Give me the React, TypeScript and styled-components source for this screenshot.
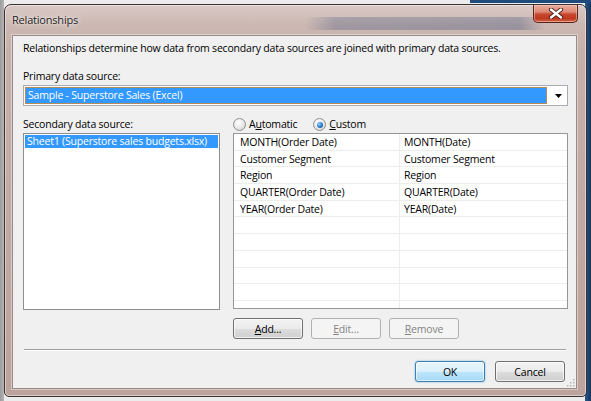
import React from 'react';
import styled, { createGlobalStyle } from 'styled-components';

const GlobalStyle = createGlobalStyle`
  html, body {
    margin: 0;
    padding: 0;
  }
  body {
    background: #e9e9e9;
    font-family: "Open Sans", "Noto Sans", "Liberation Sans", sans-serif;
    font-size: 10.5px;
    letter-spacing: -0.2px;
    color: #000;
  }
  * {
    box-sizing: border-box;
  }
`;

const Screen = styled.div`
  width: 591px;
  height: 401px;
  overflow: hidden;
  padding: 4px 0 0 4px;
  background:
    linear-gradient(#1f4a7c, #1f4a7c) 470px 0 / 121px 3px no-repeat,
    linear-gradient(90deg, #9c9c9c 0, #b5b5b5 4px, #ececec 4px, #ececec 585px, #2a578c 585px, #16365e 591px);
`;

const Window = styled.div`
  width: 583px;
  height: 393px;
  border: 1px solid #3b3231;
  border-radius: 7px 7px 5px 5px;
  background: linear-gradient(180deg, #d0bdb8 0%, #c6b0aa 12%, #bca39c 100%);
  box-shadow: inset 0 0 0 1px rgba(255, 255, 255, 0.45);
  display: flex;
  flex-direction: column;
`;

const TitleBar = styled.div`
  height: 30px;
  display: flex;
  align-items: flex-start;
  padding-left: 7px;
  border-radius: 6px 6px 0 0;
  background:
    linear-gradient(180deg, rgba(255, 255, 255, 0.2), rgba(255, 255, 255, 0) 70%),
    linear-gradient(90deg, rgba(60, 80, 120, 0) 300px, rgba(60, 80, 120, 0.3) 330px, rgba(60, 80, 120, 0.35) 515px, rgba(60, 80, 120, 0) 540px) 0 12px / 100% 13px no-repeat;
`;

const Title = styled.div`
  margin-top: 7px;
  font-size: 11px;
  line-height: 15px;
  color: #1c1c1c;
  text-shadow: 0 0 6px rgba(255, 255, 255, 0.9), 0 0 2px rgba(255, 255, 255, 0.8);
`;

const CloseButton = styled.div`
  width: 45px;
  height: 18px;
  margin-left: auto;
  margin-right: 8px;
  border: 1px solid #5a2219;
  border-top: none;
  border-radius: 0 0 5px 5px;
  background: linear-gradient(180deg, #e9ab9d 0%, #dc8a76 40%, #c8452e 55%, #c0391f 80%, #d66a4e 100%);
  box-shadow: inset 0 0 0 1px rgba(255, 220, 210, 0.45);
  display: flex;
  align-items: center;
  justify-content: center;
`;

const Client = styled.div`
  flex: 1;
  margin: 0 9px 7px 7px;
  position: relative;
  background: #f0f0f0;
  border: 1px solid #978a86;
  box-shadow: 0 0 0 1px rgba(255, 255, 255, 0.4);
  padding: 5px 8px 0 10px;
  display: flex;
  flex-direction: column;
`;

const Text = styled.div<{ $top?: number }>`
  line-height: 15px;
  height: 15px;
  white-space: nowrap;
  margin-top: ${p => p.$top ?? 0}px;
`;

const Combo = styled.div`
  margin-top: 1px;
  height: 21px;
  border: 1px solid #abadb3;
  background: #fff;
  padding: 1px;
  display: flex;
`;

const ComboField = styled.div`
  flex: 1;
  background: #3399ff;
  border: 1px solid #b58a5a;
  color: #fff;
  padding-left: 2px;
  line-height: 15px;
  white-space: nowrap;
`;

const ComboArrow = styled.div`
  width: 19px;
  padding-left: 3px;
  display: flex;
  align-items: center;
  justify-content: center;
`;

const Columns = styled.div`
  margin-top: 11px;
  display: grid;
  grid-template-columns: 197px 335px;
  column-gap: 13px;
`;

const Column = styled.div`
  display: flex;
  flex-direction: column;
`;

const ListBox = styled.div`
  margin-top: 1px;
  height: 177px;
  border: 1px solid #8e8f8f;
  background: #fff;
  padding: 1px;
`;

const ListItem = styled.div<{ $selected?: boolean }>`
  height: 13px;
  line-height: 13px;
  padding-left: 2px;
  white-space: nowrap;
  overflow: hidden;
  background: ${p => (p.$selected ? '#3399ff' : 'transparent')};
  color: ${p => (p.$selected ? '#fff' : '#000')};
`;

const RadioRow = styled.div`
  height: 15px;
  display: flex;
  align-items: center;
  gap: 16px;
`;

const RadioLabel = styled.label`
  display: flex;
  align-items: center;
  gap: 3px;
  line-height: 15px;
`;

const RadioCircle = styled.span<{ $checked?: boolean }>`
  width: 13px;
  height: 13px;
  border-radius: 50%;
  border: 1px solid #8e8f8f;
  background: radial-gradient(circle at 40% 35%, #ffffff 0, #ececec 45%, #cdcdcd 100%);
  display: flex;
  align-items: center;
  justify-content: center;

  &::after {
    content: '';
    display: ${p => (p.$checked ? 'block' : 'none')};
    width: 6px;
    height: 6px;
    border-radius: 50%;
    background: radial-gradient(circle at 35% 35%, #9ad6ff 0, #2a7fd0 50%, #0d3f80 100%);
  }
`;

const Table = styled.div`
  margin-top: 1px;
  height: 176px;
  border: 1px solid #969696;
  background: #fff;
  overflow: hidden;
`;

const TableRow = styled.div`
  height: 16.7px;
  display: grid;
  grid-template-columns: 166px 1fr;
  border-bottom: 1px solid #ededed;
`;

const Cell = styled.div<{ $first?: boolean }>`
  padding-left: ${p => (p.$first ? 6 : 4)}px;
  line-height: 16px;
  white-space: nowrap;
  border-right: ${p => (p.$first ? '1px solid #ededed' : 'none')};
`;

const ButtonRow = styled.div`
  margin-top: 9px;
  display: flex;
  gap: 8px;
`;

const Button = styled.button<{ $default?: boolean }>`
  width: 70px;
  height: 21px;
  padding: 0;
  font-family: inherit;
  font-size: 10.5px;
  letter-spacing: -0.2px;
  color: #000;
  border: 1px solid ${p => (p.$default ? '#3c7fb1' : '#707070')};
  border-radius: 3px;
  background: ${p =>
    p.$default
      ? 'linear-gradient(#eaf6fd 0%, #d9f0fc 50%, #bee6fd 50%, #a7d9f5 100%)'
      : 'linear-gradient(#f2f2f2 0%, #ebebeb 50%, #dddddd 50%, #cfcfcf 100%)'};
  box-shadow: ${p =>
    p.$default
      ? 'inset 0 0 0 1px rgba(255,255,255,0.6), 0 0 2px rgba(60,160,220,0.7)'
      : 'inset 0 0 0 1px rgba(255,255,255,0.7)'};

  &:disabled {
    border-color: #adb2b5;
    background: #f4f4f4;
    color: #838383;
    box-shadow: none;
  }
`;

const Key = styled.span`
  text-decoration: underline;
`;

const Separator = styled.div`
  margin: 10px 2px 0 1px;
  border-top: 1px solid #a0a0a0;
  border-bottom: 1px solid #ffffff;
`;

const Footer = styled.div`
  margin-top: 10px;
  padding-right: 3px;
  display: flex;
  justify-content: flex-end;
  gap: 10px;
`;

const Grip = styled.svg`
  position: absolute;
  right: 1px;
  bottom: 1px;
`;

const mappings = [
  ['MONTH(Order Date)', 'MONTH(Date)'],
  ['Customer Segment', 'Customer Segment'],
  ['Region', 'Region'],
  ['QUARTER(Order Date)', 'QUARTER(Date)'],
  ['YEAR(Order Date)', 'YEAR(Date)'],
];

const App: React.FC = () => {
  const rows = [...mappings];
  while (rows.length < 11) rows.push(['', '']);

  return (
    <Screen>
      <GlobalStyle />
      <Window>
        <TitleBar>
          <Title>Relationships</Title>
          <CloseButton>
            <svg width="16" height="11" viewBox="0 0 16 11">
              <path d="M3 1.5 L13 9.5 M13 1.5 L3 9.5" stroke="#4a1c14" strokeWidth="4.2" strokeLinecap="round" />
              <path d="M3 1.5 L13 9.5 M13 1.5 L3 9.5" stroke="#ffffff" strokeWidth="2.4" strokeLinecap="round" />
            </svg>
          </CloseButton>
        </TitleBar>

        <Client>
          <Text>Relationships determine how data from secondary data sources are joined with primary data sources.</Text>
          <Text $top={13}>Primary data source:</Text>
          <Combo>
            <ComboField>Sample - Superstore Sales (Excel)</ComboField>
            <ComboArrow>
              <svg width="7" height="4" viewBox="0 0 7 4">
                <path d="M0 0 H7 L3.5 4 Z" fill="#000" />
              </svg>
            </ComboArrow>
          </Combo>

          <Columns>
            <Column>
              <Text>Secondary data source:</Text>
              <ListBox>
                <ListItem $selected>Sheet1 (Superstore sales budgets.xlsx)</ListItem>
              </ListBox>
            </Column>
            <Column>
              <RadioRow>
                <RadioLabel>
                  <RadioCircle />
                  <span>A<Key>u</Key>tomatic</span>
                </RadioLabel>
                <RadioLabel>
                  <RadioCircle $checked />
                  <span><Key>C</Key>ustom</span>
                </RadioLabel>
              </RadioRow>
              <Table>
                {rows.map((r, i) => (
                  <TableRow key={i}>
                    <Cell $first>{r[0]}</Cell>
                    <Cell>{r[1]}</Cell>
                  </TableRow>
                ))}
              </Table>
              <ButtonRow>
                <Button><Key>A</Key>dd...</Button>
                <Button disabled><Key>E</Key>dit...</Button>
                <Button disabled><Key>R</Key>emove</Button>
              </ButtonRow>
            </Column>
          </Columns>

          <Separator />
          <Footer>
            <Button $default>OK</Button>
            <Button>Cancel</Button>
          </Footer>

          <Grip width="10" height="10" viewBox="0 0 10 10">
            {[[8, 2], [5, 5], [8, 5], [2, 8], [5, 8], [8, 8]].map(([x, y], i) => (
              <rect key={i} x={x} y={y} width="1.5" height="1.5" fill="#b5b5b5" />
            ))}
          </Grip>
        </Client>
      </Window>
    </Screen>
  );
};

export default App;
